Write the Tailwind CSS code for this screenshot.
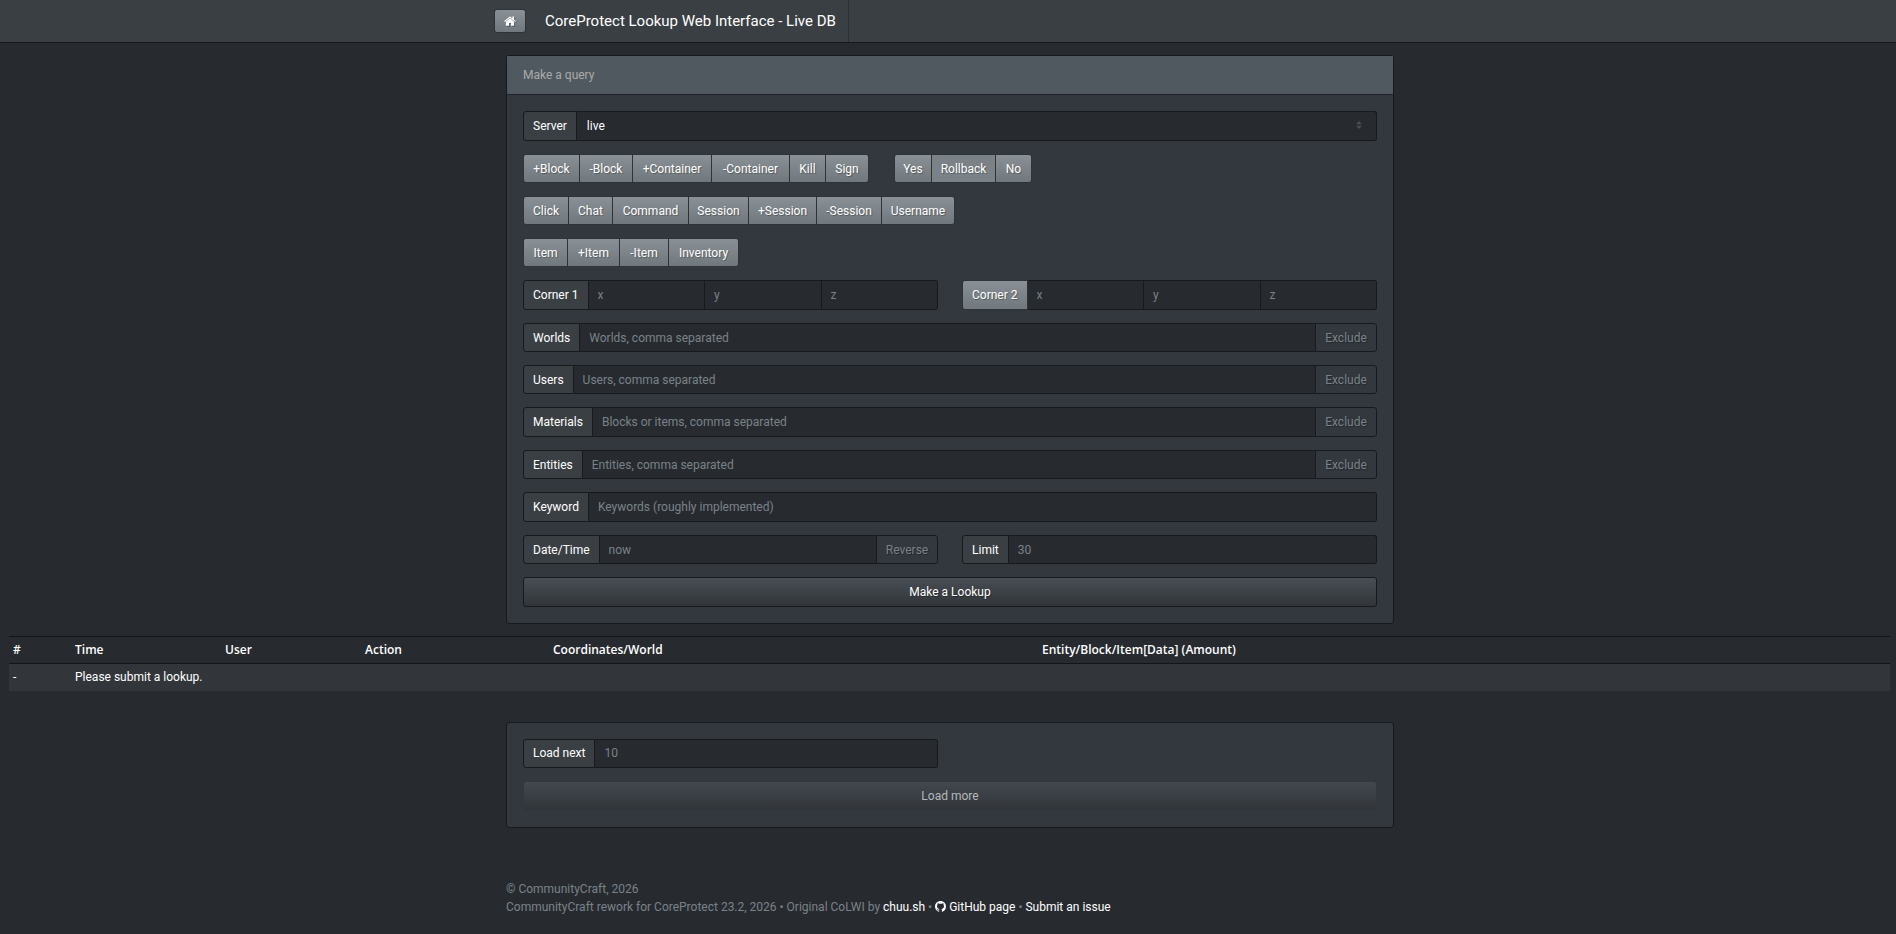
<!DOCTYPE html>
<html lang="en">
<head>
<meta charset="utf-8">
<title>CoreProtect Lookup Web Interface</title>
<script src="https://cdn.jsdelivr.net/npm/@tailwindcss/browser@4"></script>
</head>
<body class="min-h-screen overflow-x-hidden bg-[#272b30] font-[Roboto,'Segoe_UI',sans-serif] text-[12px] leading-[18px] text-[#7a8288]">

<nav class="border-b border-[#17191c] bg-[#3a3f44] pl-1">
  <div class="mx-auto flex h-[42px] max-w-[912px] items-stretch">
    <a href="#" aria-label="Home" class="my-auto flex h-6 w-8 items-center justify-center rounded-[3px] border border-[#2f3337] bg-linear-to-b from-[#8a9196] to-[#70787d] text-white">
      <svg class="h-[10px] w-[12px] drop-shadow-[1px_1px_0_rgba(0,0,0,0.3)]" viewBox="0 0 1664 1312" fill="currentColor" aria-hidden="true"><path d="M1408 768v480q0 26-19 45t-45 19H960V928H704v384H320q-26 0-45-19t-19-45V768q0-1 .5-3t.5-3l575-474 575 474q1 2 1 6zm223-69l-62 74q-8 9-21 11h-3q-13 0-21-7L832 200 140 777q-12 8-24 7-13-2-21-11l-62-74q-8-10-7-23.500t11-21.500L756 55q32-26 76-26t76 26l244 204V64q0-14 9-23t23-9h192q14 0 23 9t9 23v408l219 182q10 8 11 21.500t-7 23.500z"/></svg>
    </a>
    <a href="#" class="ml-[7px] flex items-center border-r border-[#2c3034] px-3 text-[15px] text-white">CoreProtect Lookup Web Interface - Live DB</a>
  </div>
</nav>

<main>
  <div class="pl-1">
    <div class="mx-auto max-w-[912px] px-3 pt-3">
      <form class="rounded-[3px] border border-[#17191c] bg-[#32383e]">
        <div class="flex h-[39px] items-center border-b border-[#202327] bg-[#515960] px-4 text-[#aaaaaa]">Make a query</div>
        <div class="flex flex-col gap-[13px] p-4 text-white">

          <div class="flex h-[30px]">
            <label for="server" class="flex items-center rounded-l-[3px] border border-[#17191c] bg-[#3a3f44] px-[9px]">Server</label>
            <div class="relative flex flex-1">
              <select id="server" class="flex-1 appearance-none rounded-r-[3px] border border-l-0 border-[#17191c] bg-[#272b30] px-[10px] text-white"><option>live</option></select>
              <svg class="pointer-events-none absolute top-[10px] right-[15px] h-2 w-[6px]" viewBox="0 0 6 8" fill="#4a4f54" aria-hidden="true"><path d="M3 0L6 3.300H0zM3 8L0 4.700h6z"/></svg>
            </div>
          </div>

          <div class="flex h-[29px] gap-[25px]">
            <div class="flex gap-px overflow-hidden rounded-[3px] border border-[#2f3337] bg-[#2f3337] [&>button]:bg-linear-to-b [&>button]:from-[#8a9196] [&>button]:to-[#70787d] [&>button]:text-shadow-[1px_1px_1px_rgba(0,0,0,0.3)]">
              <button type="button" class="w-[55px]">+Block</button><button type="button" class="w-[52px]">-Block</button><button type="button" class="w-[78px]">+Container</button><button type="button" class="w-[77px]">-Container</button><button type="button" class="w-[35px]">Kill</button><button type="button" class="w-[42px]">Sign</button>
            </div>
            <div class="flex gap-px overflow-hidden rounded-[3px] border border-[#2f3337] bg-[#2f3337] [&>button]:bg-linear-to-b [&>button]:from-[#8a9196] [&>button]:to-[#70787d] [&>button]:text-shadow-[1px_1px_1px_rgba(0,0,0,0.3)]">
              <button type="button" class="w-[36px]">Yes</button><span class="flex w-[63px] items-center justify-center bg-[#7a8288] text-shadow-[1px_1px_1px_rgba(0,0,0,0.3)]">Rollback</span><button type="button" class="w-[35px]">No</button>
            </div>
          </div>

          <div class="flex h-[29px]">
            <div class="flex gap-px overflow-hidden rounded-[3px] border border-[#2f3337] bg-[#2f3337] [&>button]:bg-linear-to-b [&>button]:from-[#8a9196] [&>button]:to-[#70787d] [&>button]:text-shadow-[1px_1px_1px_rgba(0,0,0,0.3)]">
              <button type="button" class="w-[44px]">Click</button><button type="button" class="w-[43px]">Chat</button><button type="button" class="w-[75px]">Command</button><button type="button" class="w-[59px]">Session</button><button type="button" class="w-[67px]">+Session</button><button type="button" class="w-[64px]">-Session</button><button type="button" class="w-[72px]">Username</button>
            </div>
          </div>

          <div class="flex h-[29px]">
            <div class="flex gap-px overflow-hidden rounded-[3px] border border-[#2f3337] bg-[#2f3337] [&>button]:bg-linear-to-b [&>button]:from-[#8a9196] [&>button]:to-[#70787d] [&>button]:text-shadow-[1px_1px_1px_rgba(0,0,0,0.3)]">
              <button type="button" class="w-[43px]">Item</button><button type="button" class="w-[51px]">+Item</button><button type="button" class="w-[48px]">-Item</button><button type="button" class="w-[69px]">Inventory</button>
            </div>
          </div>

          <div class="grid h-[30px] grid-cols-2 gap-6 [&_input]:min-w-0 [&_input]:flex-1 [&_input]:border-y [&_input]:border-r [&_input]:border-[#17191c] [&_input]:bg-[#272b30] [&_input]:px-[9px] [&_input]:placeholder:text-[#7a8288]">
            <div class="flex">
              <label for="x1" class="flex items-center rounded-l-[3px] border border-[#17191c] bg-[#3a3f44] px-[9px]">Corner 1</label>
              <input id="x1" placeholder="x"><input aria-label="Corner 1 y" placeholder="y"><input aria-label="Corner 1 z" placeholder="z" class="rounded-r-[3px]">
            </div>
            <div class="flex">
              <button type="button" class="rounded-l-[3px] border border-[#2f3337] bg-linear-to-b from-[#8a9196] to-[#70787d] px-[9px] text-shadow-[1px_1px_1px_rgba(0,0,0,0.3)]">Corner 2</button>
              <input aria-label="Corner 2 x" placeholder="x"><input aria-label="Corner 2 y" placeholder="y"><input aria-label="Corner 2 z" placeholder="z" class="rounded-r-[3px]">
            </div>
          </div>

          <div class="flex h-[29px]">
            <label for="worlds" class="flex items-center rounded-l-[3px] border border-[#17191c] bg-[#3a3f44] px-[9px]">Worlds</label>
            <input id="worlds" placeholder="Worlds, comma separated" class="min-w-0 flex-1 border-y border-[#17191c] bg-[#272b30] px-[9px] placeholder:text-[#7a8288]">
            <button type="button" class="w-[62px] rounded-r-[3px] border border-[#17191c] bg-[#32383e] text-[#7a8288] text-shadow-[1px_1px_1px_rgba(0,0,0,0.3)]">Exclude</button>
          </div>

          <div class="flex h-[29px]">
            <label for="users" class="flex items-center rounded-l-[3px] border border-[#17191c] bg-[#3a3f44] px-[9px]">Users</label>
            <input id="users" placeholder="Users, comma separated" class="min-w-0 flex-1 border-y border-[#17191c] bg-[#272b30] px-[9px] placeholder:text-[#7a8288]">
            <button type="button" class="w-[62px] rounded-r-[3px] border border-[#17191c] bg-[#32383e] text-[#7a8288] text-shadow-[1px_1px_1px_rgba(0,0,0,0.3)]">Exclude</button>
          </div>

          <div class="flex h-[30px]">
            <label for="materials" class="flex items-center rounded-l-[3px] border border-[#17191c] bg-[#3a3f44] px-[9px]">Materials</label>
            <input id="materials" placeholder="Blocks or items, comma separated" class="min-w-0 flex-1 border-y border-[#17191c] bg-[#272b30] px-[9px] placeholder:text-[#7a8288]">
            <button type="button" class="w-[62px] rounded-r-[3px] border border-[#17191c] bg-[#32383e] text-[#7a8288] text-shadow-[1px_1px_1px_rgba(0,0,0,0.3)]">Exclude</button>
          </div>

          <div class="flex h-[29px]">
            <label for="entities" class="flex items-center rounded-l-[3px] border border-[#17191c] bg-[#3a3f44] px-[9px]">Entities</label>
            <input id="entities" placeholder="Entities, comma separated" class="min-w-0 flex-1 border-y border-[#17191c] bg-[#272b30] px-[9px] placeholder:text-[#7a8288]">
            <button type="button" class="w-[62px] rounded-r-[3px] border border-[#17191c] bg-[#32383e] text-[#7a8288] text-shadow-[1px_1px_1px_rgba(0,0,0,0.3)]">Exclude</button>
          </div>

          <div class="flex h-[30px]">
            <label for="keyword" class="flex items-center rounded-l-[3px] border border-[#17191c] bg-[#3a3f44] px-[9px]">Keyword</label>
            <input id="keyword" placeholder="Keywords (roughly implemented)" class="min-w-0 flex-1 rounded-r-[3px] border-y border-r border-[#17191c] bg-[#272b30] px-[9px] placeholder:text-[#7a8288]">
          </div>

          <div class="grid h-[29px] grid-cols-2 gap-6">
            <div class="flex">
              <label for="time" class="flex items-center rounded-l-[3px] border border-[#17191c] bg-[#3a3f44] px-[9px]">Date/Time</label>
              <input id="time" placeholder="now" class="min-w-0 flex-1 border-y border-[#17191c] bg-[#272b30] px-[9px] placeholder:text-[#7a8288]">
              <button type="button" class="w-[62px] rounded-r-[3px] border border-[#17191c] bg-[#32383e] text-[#7a8288] text-shadow-[1px_1px_1px_rgba(0,0,0,0.3)]">Reverse</button>
            </div>
            <div class="flex">
              <label for="limit" class="flex items-center rounded-l-[3px] border border-[#17191c] bg-[#3a3f44] px-[9px]">Limit</label>
              <input id="limit" placeholder="30" class="min-w-0 flex-1 rounded-r-[3px] border-y border-r border-[#17191c] bg-[#272b30] px-[9px] placeholder:text-[#7a8288]">
            </div>
          </div>

          <button type="submit" class="h-[30px] rounded-[3px] border border-[#17191c] bg-linear-to-b from-[#484e55] via-[#3a3f44] via-60% to-[#313539] text-shadow-[1px_1px_1px_rgba(0,0,0,0.3)]">Make a Lookup</button>
        </div>
      </form>
    </div>
  </div>

  <div class="mt-3 mr-[6px] ml-[9px]">
    <table class="w-full table-fixed border-collapse text-left text-white">
      <colgroup><col class="w-[62px]"><col class="w-[150px]"><col class="w-[140px]"><col class="w-[188px]"><col class="w-[489px]"><col></colgroup>
      <thead class="font-['Open_Sans','Segoe_UI',sans-serif]">
        <tr class="h-[27px] border-y border-[#121416]">
          <th class="px-1 font-semibold">#</th><th class="px-1 font-semibold">Time</th><th class="px-1 font-semibold">User</th><th class="px-1 font-semibold">Action</th><th class="px-1 font-semibold">Coordinates/World</th><th class="px-1 font-semibold">Entity/Block/Item[Data] (Amount)</th>
        </tr>
      </thead>
      <tbody>
        <tr class="h-[27px] bg-[#32363a]"><td class="px-1">-</td><td class="px-1" colspan="5">Please submit a lookup.</td></tr>
      </tbody>
    </table>
  </div>

  <div class="pl-1">
    <div class="mx-auto max-w-[912px] px-3 pt-[31px]">
      <form class="flex flex-col gap-[13px] rounded-[3px] border border-[#17191c] bg-[#32383e] p-4 text-white">
        <div class="grid h-[29px] grid-cols-2 gap-6">
          <div class="flex">
            <label for="next" class="flex items-center rounded-l-[3px] border border-[#17191c] bg-[#3a3f44] px-[9px]">Load next</label>
            <input id="next" placeholder="10" class="min-w-0 flex-1 rounded-r-[3px] border-y border-r border-[#17191c] bg-[#272b30] px-[9px] placeholder:text-[#7a8288]">
          </div>
        </div>
        <button type="submit" disabled class="h-[30px] rounded-[3px] border border-[#32373b] bg-linear-to-b from-[#42484f] via-[#383d43] via-60% to-[#313539] text-[#b5b8ba]">Load more</button>
      </form>
    </div>
  </div>
</main>

<footer class="pl-1">
  <div class="mx-auto max-w-[912px] px-3 pt-[52px] pb-4">
    <p>© CommunityCraft, 2026</p>
    <p>CommunityCraft rework for CoreProtect 23.2, 2026 • Original CoLWI by <a href="#" class="text-white">chuu.sh</a> • <a href="#" class="text-white"><svg class="inline-block h-[11px] w-[11px] align-[-1px]" viewBox="0 0 16 16" fill="currentColor" aria-hidden="true"><path d="M8 0C3.580 0 0 3.580 0 8c0 3.540 2.290 6.530 5.470 7.590.4.070.55-.17.55-.38v-1.490c-2.010.37-2.530-.49-2.690-.94-.09-.23-.48-.94-.82-1.130-.28-.15-.68-.52-.01-.53.63-.01 1.080.58 1.230.82.72 1.210 1.870.87 2.330.66.07-.52.28-.87.51-1.070-1.780-.2-3.640-.89-3.640-3.950 0-.87.31-1.590.82-2.150-.08-.2-.36-1.020.08-2.120 0 0 .67-.21 2.200.82A7.600 7.600 0 018 3.860c.68 0 1.360.09 2 .27 1.530-1.040 2.200-.82 2.200-.82.44 1.100.16 1.920.08 2.120.51.56.82 1.270.82 2.150 0 3.070-1.870 3.750-3.650 3.950.29.25.54.73.54 1.480v2.200c0 .21.15.46.55.38A8 8 0 0016 8c0-4.420-3.580-8-8-8z"/></svg> GitHub page</a> • <a href="#" class="text-white">Submit an issue</a></p>
  </div>
</footer>
</body>
</html>
